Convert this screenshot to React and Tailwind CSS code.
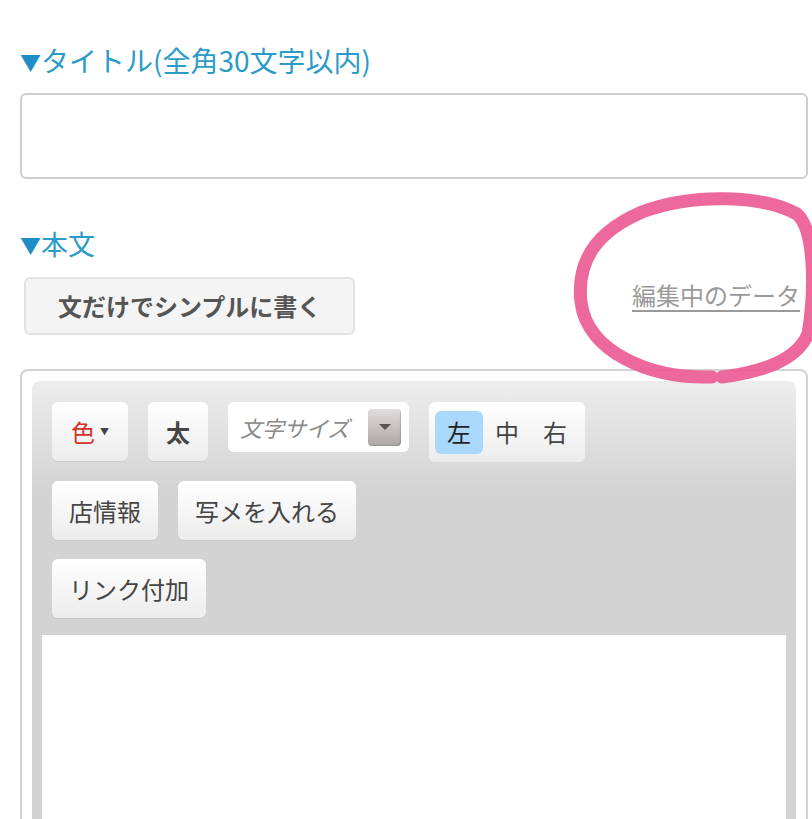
import React from 'react';

const ToolButton = ({ children, className = '' }) => (
  <button
    type="button"
    className={`h-[59px] px-[17px] rounded-md bg-linear-to-b from-white to-[#ececec] text-[24px] text-[#444] flex items-center shadow-[0_1px_1px_rgba(0,0,0,0.06)] ${className}`}>
    {children}
  </button>
);

const App = () => {
  return (
    <div
      className="relative w-[812px] h-[819px] overflow-hidden bg-white"
      style={{ fontFamily: '"Noto Sans CJK JP", "Noto Sans", sans-serif' }}>
      <div className="pl-5 pr-1 pt-[42px]">
        <h2 className="text-[28px] leading-[36px] text-[#2b9bc7]">
          <span className="text-[#1d8fc6] text-[21px] align-[2px]">▼</span>タイトル(全角30文字以内)
        </h2>
        <input
          type="text"
          className="mt-[14px] block w-full h-[86px] border-2 border-[#cfcfcf] rounded-md px-3 text-[24px] outline-none"
        />

        <h2 className="mt-[47px] text-[27px] leading-[36px] text-[#2b9bc7]">
          <span className="text-[#1d8fc6] text-[21px] align-[2px]">▼</span>本文
        </h2>

        <div className="mt-[15px] flex items-start justify-between pr-2">
          <button
            type="button"
            className="ml-1 h-[58px] px-[32px] rounded-md bg-[#f4f4f4] border-2 border-[#e2e2e2] text-[24px] font-bold text-[#555]">
            文だけでシンプルに書く
          </button>
          <a href="#" className="mt-0 text-[24px] text-[#9a9a9a] underline underline-offset-[5px] decoration-[#9a9a9a]">
            編集中のデータ
          </a>
        </div>

        <div className="mt-[34px] border-2 border-b-0 border-[#d2d2d2] rounded-t-lg pt-[10px] px-[10px]">
          <div className="rounded-t-lg bg-[linear-gradient(to_bottom,#ededed,#d3d3d3_110px)] px-[10px] pb-[20px]">
            <div className="px-[10px] pt-[21px] pb-[17px] flex flex-col gap-[19px]">
              <div className="flex gap-5 items-start">
                <ToolButton className="gap-[5px] px-[19px]">
                  <span className="text-[#d2342c]">色</span>
                  <span className="text-[9px] text-[#444]">▼</span>
                </ToolButton>
                <ToolButton className="px-[18px] font-bold text-[#222]">太</ToolButton>
                <div className="h-[50px] w-[181px] rounded-md bg-white flex items-center justify-between pl-3 pr-2">
                  <span className="italic text-[22px] text-[#8a8a8a]">文字サイズ</span>
                  <span className="w-[33px] h-[37px] rounded-sm bg-linear-to-b from-[#e2dcdc] to-[#aca7a7] flex items-center justify-center shadow-[inset_-1px_-1px_1px_rgba(0,0,0,0.15)]">
                    <span className="block w-0 h-0 border-l-[6px] border-r-[6px] border-t-[6px] border-l-transparent border-r-transparent border-t-[#555]" />
                  </span>
                </div>
                <div className="h-[60px] rounded-md bg-linear-to-b from-white to-[#ececec] flex items-center px-[6px]">
                  <span className="w-12 h-[43px] rounded-md bg-[#a9d8fb] flex items-center justify-center text-[24px] text-[#222]">左</span>
                  <span className="w-12 h-[43px] flex items-center justify-center text-[24px] text-[#444]">中</span>
                  <span className="w-12 h-[43px] flex items-center justify-center text-[24px] text-[#444]">右</span>
                </div>
              </div>
              <div className="flex gap-5">
                <ToolButton>店情報</ToolButton>
                <ToolButton>写メを入れる</ToolButton>
              </div>
              <div className="flex gap-5">
                <ToolButton>リンク付加</ToolButton>
              </div>
            </div>
            <div className="bg-white h-[260px]" />
          </div>
        </div>
      </div>

      <svg
        className="absolute left-0 top-0 pointer-events-none"
        width="812"
        height="819"
        viewBox="0 0 812 819">
        <path
          d="M 712 377 C 650 379, 587 352, 581 302 C 576 258, 600 230, 642 212 C 690 194, 760 194, 797 214 C 817 232, 814 300, 808 334 C 797 360, 762 372, 722 377"
          fill="none"
          stroke="#ec5b95"
          strokeOpacity="0.92"
          strokeWidth="13"
          strokeLinecap="round"
        />
      </svg>
    </div>
  );
};

export default App;
